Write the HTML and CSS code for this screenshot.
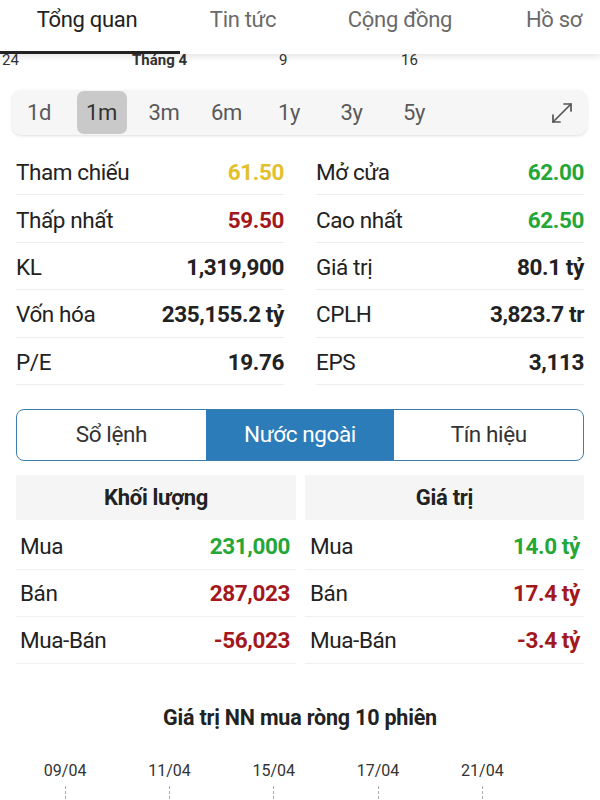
FILE: index.html
```html
<!DOCTYPE html>
<html lang="vi">
<head>
    <meta charset="UTF-8">
    <meta name="viewport" content="width=device-width, initial-scale=1.0">
    <title>Tổng quan</title>
    <link rel="stylesheet" href="styles.css">
</head>
<body>
    <nav class="topbar">
        <div class="tab active">Tổng quan</div>
        <div class="tab">Tin tức</div>
        <div class="tab">Cộng đồng</div>
        <div class="tab">Hồ sơ</div>
    </nav>

    <div class="axis-strip">
        <span class="ax ax-1">24</span>
        <span class="ax ax-2">Tháng 4</span>
        <span class="ax ax-3">9</span>
        <span class="ax ax-4">16</span>
    </div>

    <div class="range-bar">
        <span class="range">1d</span>
        <span class="range active">1m</span>
        <span class="range">3m</span>
        <span class="range">6m</span>
        <span class="range">1y</span>
        <span class="range">3y</span>
        <span class="range">5y</span>
        <span class="expand">
            <svg width="22" height="22" viewBox="0 0 22 22" fill="none" stroke="#555" stroke-width="1.7" stroke-linecap="round" stroke-linejoin="round">
                <path d="M2 20 L20 2"/>
                <path d="M13 2 H20 V9"/>
                <path d="M2 13 V20 H9"/>
            </svg>
        </span>
    </div>

    <div class="stats">
        <div class="stat-col">
            <div class="row"><span>Tham chiếu</span><b class="yellow">61.50</b></div>
            <div class="row"><span>Thấp nhất</span><b class="red">59.50</b></div>
            <div class="row"><span>KL</span><b>1,319,900</b></div>
            <div class="row"><span>Vốn hóa</span><b>235,155.2 tỷ</b></div>
            <div class="row"><span>P/E</span><b>19.76</b></div>
        </div>
        <div class="stat-col">
            <div class="row"><span>Mở cửa</span><b class="green">62.00</b></div>
            <div class="row"><span>Cao nhất</span><b class="green">62.50</b></div>
            <div class="row"><span>Giá trị</span><b>80.1 tỷ</b></div>
            <div class="row"><span>CPLH</span><b>3,823.7 tr</b></div>
            <div class="row"><span>EPS</span><b>3,113</b></div>
        </div>
    </div>

    <div class="segment">
        <div class="seg">Sổ lệnh</div>
        <div class="seg active">Nước ngoài</div>
        <div class="seg">Tín hiệu</div>
    </div>

    <div class="foreign">
        <div class="f-col">
            <div class="f-head">Khối lượng</div>
            <div class="f-row"><span>Mua</span><b class="green">231,000</b></div>
            <div class="f-row"><span>Bán</span><b class="red">287,023</b></div>
            <div class="f-row"><span>Mua-Bán</span><b class="red">-56,023</b></div>
        </div>
        <div class="f-col right">
            <div class="f-head">Giá trị</div>
            <div class="f-row"><span>Mua</span><b class="green">14.0 tỷ</b></div>
            <div class="f-row"><span>Bán</span><b class="red">17.4 tỷ</b></div>
            <div class="f-row"><span>Mua-Bán</span><b class="red">-3.4 tỷ</b></div>
        </div>
    </div>

    <h3 class="chart-title">Giá trị NN mua ròng 10 phiên</h3>

    <div class="dates">
        <div class="date"><span>09/04</span><i></i></div>
        <div class="date"><span>11/04</span><i></i></div>
        <div class="date"><span>15/04</span><i></i></div>
        <div class="date"><span>17/04</span><i></i></div>
        <div class="date"><span>21/04</span><i></i></div>
    </div>
</body>
</html>
```

FILE: styles.css
```css
body {
    font-family: Roboto, "Noto Sans", sans-serif;
    background-color: #ffffff;
    color: #222;
    margin: 0;
    padding: 0;
    overflow: hidden;
}
.topbar {
    position: relative;
    z-index: 2;
    height: 54px;
    background-color: #fff;
    display: flex;
    box-shadow: 0 3px 6px rgba(0, 0, 0, 0.1);
}
.tab {
    flex-shrink: 0;
    font-size: 22px;
    letter-spacing: -0.3px;
    color: #6a6a6a;
    padding-top: 7px;
    text-align: center;
    box-sizing: border-box;
}
.tab:nth-child(1) { width: 180px; padding-right: 6px; }
.tab:nth-child(2) { width: 126px; }
.tab:nth-child(3) { width: 188px; }
.tab:nth-child(4) { width: 120px; }
.tab.active {
    color: #222;
    position: relative;
}
.tab.active::after {
    content: "";
    position: absolute;
    left: 0;
    right: 0;
    bottom: 0;
    height: 3px;
    background-color: #222;
}
.axis-strip {
    position: relative;
    height: 14px;
    font-size: 15px;
    line-height: 15px;
    color: #333;
    overflow: hidden;
}
.ax {
    position: absolute;
    top: -1px;
}
.ax-1 { left: 2px; }
.ax-2 { left: 132px; font-weight: bold; }
.ax-3 { left: 279px; }
.ax-4 { left: 401px; }
.range-bar {
    margin: 22px 13px 0 12px;
    height: 45px;
    background-color: #f6f6f6;
    border-radius: 9px;
    box-shadow: 0 1px 3px rgba(0, 0, 0, 0.13);
    display: flex;
    align-items: center;
    padding-left: 2px;
    box-sizing: border-box;
}
.range {
    width: 50px;
    height: 43px;
    line-height: 43px;
    margin-right: 12.5px;
    text-align: center;
    font-size: 22px;
    letter-spacing: -0.3px;
    color: #5a5a5a;
    border-radius: 7px;
}
.range.active {
    background-color: #c9c9c9;
    color: #333;
}
.expand {
    margin-left: auto;
    margin-right: 14px;
    display: flex;
}
.stats {
    display: flex;
    justify-content: space-between;
    margin: 13px 16px 0;
}
.stat-col {
    width: 268px;
}
.row {
    display: flex;
    justify-content: space-between;
    align-items: center;
    height: 47.4px;
    box-sizing: border-box;
    padding-top: 2px;
    border-bottom: 1px solid #eeeeee;
    font-size: 22.5px;
    letter-spacing: -0.4px;
}
.row b, .f-row b {
    font-weight: bold;
    color: #222;
}
.yellow { color: #e3c02c !important; }
.red { color: #a3181d !important; }
.green { color: #25a737 !important; }
.segment {
    display: flex;
    margin: 24px 16px 0;
    height: 52px;
    border: 1.5px solid #3c7eae;
    border-radius: 8px;
    overflow: hidden;
    box-sizing: border-box;
}
.seg {
    flex: 1;
    text-align: center;
    line-height: 49px;
    font-size: 22.5px;
    letter-spacing: -0.4px;
    color: #333;
}
.seg.active {
    background-color: #2b7cb9;
    color: #fff;
}
.foreign {
    display: flex;
    justify-content: space-between;
    margin: 14px 16px 0;
}
.f-col {
    width: 280px;
}
.f-col.right {
    width: 279px;
}
.f-head {
    height: 45px;
    line-height: 45px;
    margin-bottom: 3px;
    background-color: #f5f5f5;
    text-align: center;
    font-weight: bold;
    font-size: 22px;
    letter-spacing: -0.3px;
    color: #222;
}
.f-row {
    display: flex;
    justify-content: space-between;
    align-items: center;
    height: 47px;
    box-sizing: border-box;
    border-bottom: 1px solid #f0f0f0;
    padding: 0 6px 0 4px;
    font-size: 22.5px;
    letter-spacing: -0.4px;
}
.f-col.right .f-row {
    padding: 0 4px 0 5px;
}
.chart-title {
    margin: 41px 0 0;
    text-align: center;
    font-size: 21.5px;
    letter-spacing: -0.2px;
    font-weight: bold;
    color: #222;
}
.dates {
    display: flex;
    padding-left: 13px;
    margin-top: 31px;
}
.date {
    width: 104.3px;
    display: flex;
    flex-direction: column;
    align-items: center;
    font-size: 16px;
    color: #333;
}
.date i {
    display: block;
    width: 0;
    height: 18px;
    margin-top: 6px;
    border-left: 1px dashed #aaa;
}
```
